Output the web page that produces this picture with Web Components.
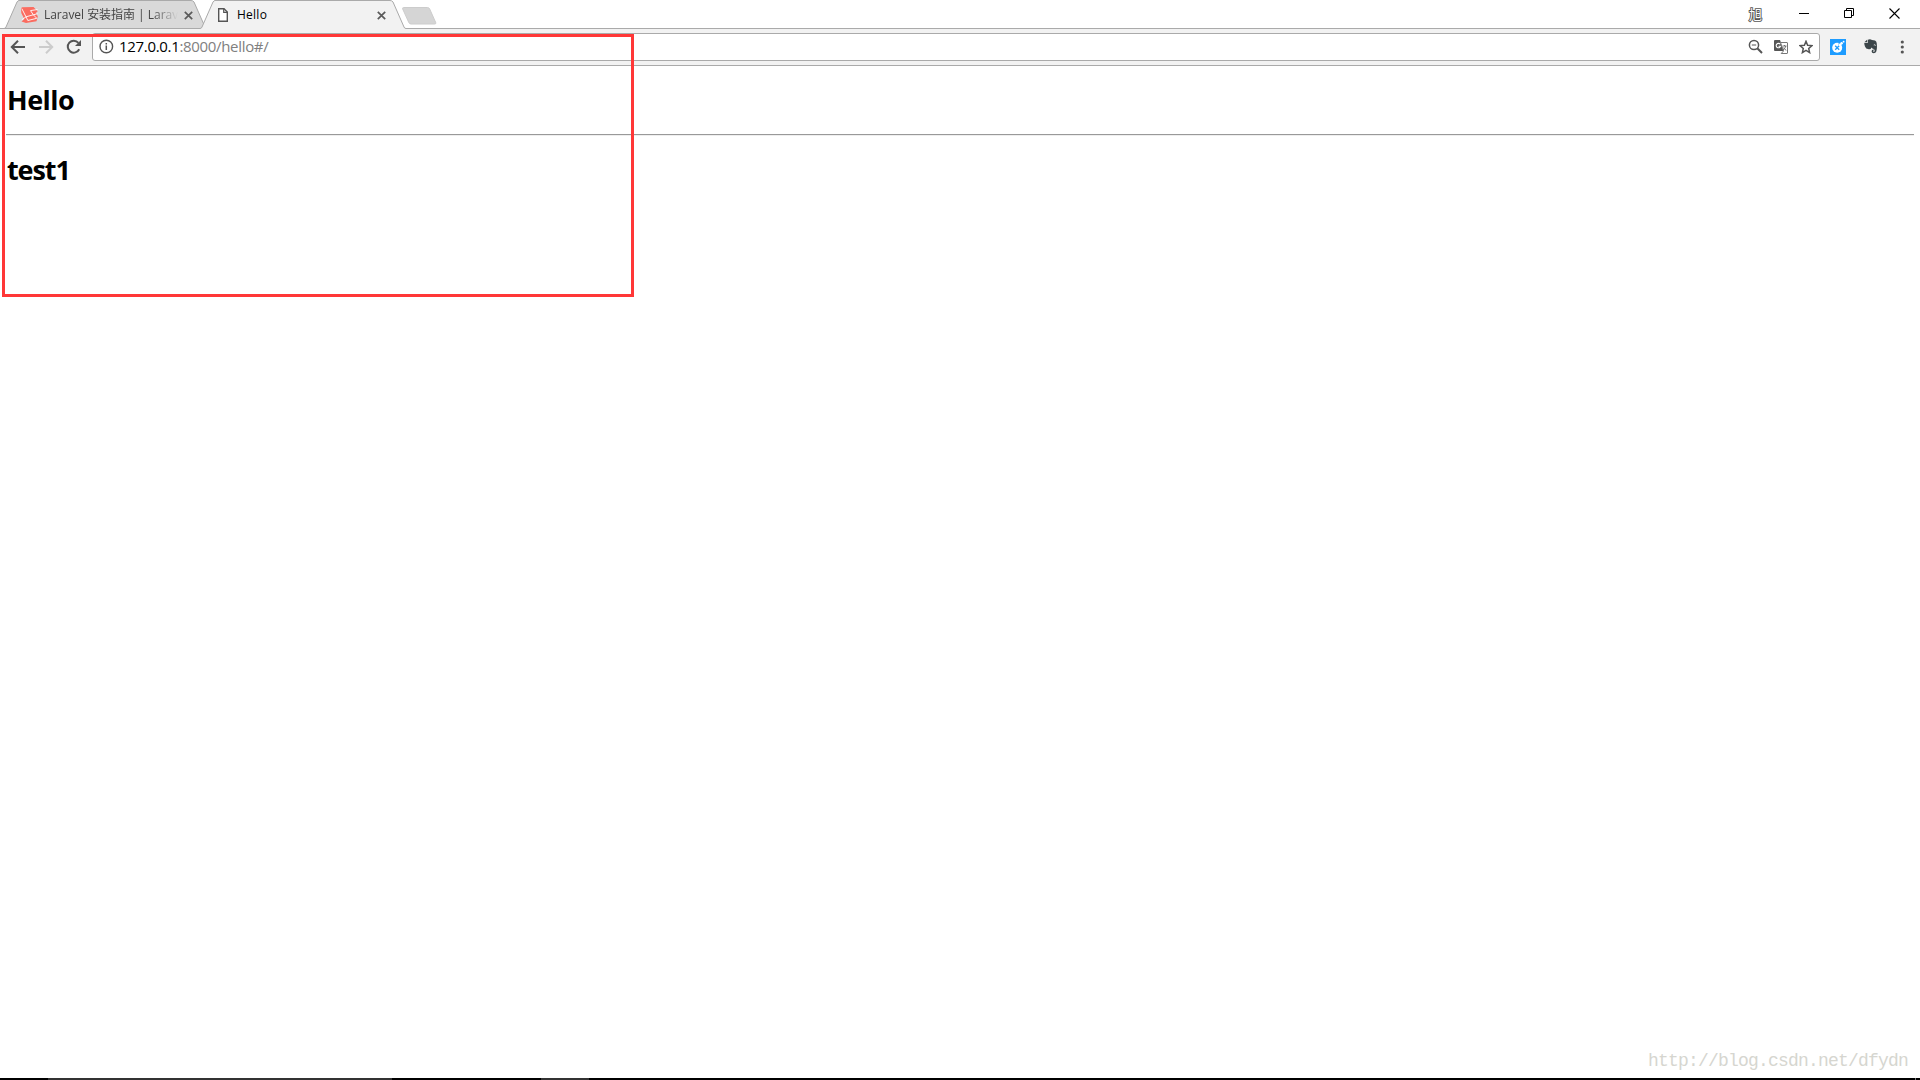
<!DOCTYPE html>
<html lang="zh-CN">
<head>
<meta charset="utf-8">
<title>Hello</title>
<style>
html, body {
    margin: 0;
    height: 100%;
    overflow: hidden;
    background: #fff;
}

body {
    font-family: "Open Sans", "Noto Sans", "Noto Sans CJK SC", sans-serif;
    color: #000;
}
</style>
</head>
<body>
<browser-window>
    <browser-tab slot="tabs" label="Laravel 安装指南 | Larav" icon="laravel"></browser-tab>
    <browser-tab slot="tabs" label="Hello" icon="page" active></browser-tab>
    <address-bar slot="toolbar" host="127.0.0.1" path=":8000/hello#/"></address-bar>
    <hello-page>
        <h1 slot="title">Hello</h1>
        <h1 slot="view">test1</h1>
    </hello-page>
</browser-window>

<script>
/* Icons, one svg body per name, with its width and height */
const icons = {
    back: [16, 16, `<path d="M15 8H2M8 1.8 1.8 8 8 14.2" fill="none" stroke="#555" stroke-width="2"/>`],
    forward: [16, 16, `<path d="M1 8H14M8 1.8 14.2 8 8 14.2" fill="none" stroke="#ccc" stroke-width="2"/>`],
    reload: [16, 16, `<path d="M13.2 10.2A6 6 0 1 1 12.4 3.8" fill="none" stroke="#555" stroke-width="2"/><path d="M15 1V7H9Z" fill="#555"/>`],
    info: [15, 15, `<circle cx="7.3" cy="7.5" r="6.3" fill="none" stroke="#555" stroke-width="1.4"/><path d="M7.3 6.5V11M7.3 4V5.5" stroke="#555" stroke-width="1.5"/>`],
    zoom: [15, 15, `<circle cx="6" cy="6" r="4.6" fill="none" stroke="#555" stroke-width="1.5"/><path d="M9.3 9.3 14 14" stroke="#555" stroke-width="2"/><path d="M3.8 6H8.2" stroke="#555"/>`],
    translate: [14, 14, `<path d="M0 1Q0 0 1 0H6L10 11H1Q0 11 0 10Z" fill="#555"/><path d="M6.5 2.5H13Q13.5 2.5 13.5 3V13Q13.5 13.5 13 13.5H7.2L9.5 11Z" fill="#fff" stroke="#777"/><path d="M6.2 4.3A2.2 2.2 0 1 0 6.5 6.3H4.5" fill="none" stroke="#fff" stroke-width="1.1"/><path d="M8.5 6H12.5M10.5 5V6M11.8 6Q11 9 9 10M9.3 7.5Q10.5 9.5 12.3 10.3" fill="none" stroke="#666" stroke-width=".9"/>`],
    star: [14, 14, `<path d="M7 1.3 8.6 5.2 12.9 5.6 9.7 8.4 10.6 12.6 7 10.4 3.4 12.6 4.3 8.4 1.1 5.6 5.4 5.2Z" fill="none" stroke="#555" stroke-width="1.5"/>`],
    extension: [16, 16, `<path d="M0 0H16V16H0Z" fill="#1e9cff"/><circle cx="7.2" cy="8.8" r="5" fill="#fff"/><path d="M5.2 6.8 9.2 10.8M9.2 6.8 5.2 10.8" stroke="#1e9cff" stroke-width="1.3"/><path d="M9.5 6.5 12 4" stroke="#fff" stroke-width="1.4"/><path d="M8.3 5.2 10.5 3" stroke="#1e9cff"/><circle cx="11.6" cy="4.2" r="1.2" fill="#fff"/><circle cx="13.6" cy="2.7" r=".9" fill="#fff"/>`],
    elephant: [14, 15, `<path d="M4 .8Q6-.2 8 1L11 1.5Q12.5 2 12.7 4Q13.4 9 12.3 12.5Q11.7 14.3 9.7 14.3Q7.5 14.2 7.6 12Q7.8 10.2 9.8 10.4V11.5Q9 11.4 9 12.3Q9.5 13 10.5 12.5Q11 11 9.8 10Q8.2 9.8 7.4 8.5Q6.8 10.7 4.8 10.3Q1.6 10 1 7.5Q.2 5.5.3 4H3.2Q4 4 4 3Z" fill="#3c464a"/><path d="M.4 3.3 3.3.6V3.3Z" fill="#3c464a"/><path d="M9.8 6Q11 5.3 11.7 6.5" fill="none" stroke="#f2f2f2" stroke-width=".9"/>`],
    menu: [4, 14, `<circle cx="2.3" cy="2" r="1.6" fill="#555"/><circle cx="2.3" cy="7" r="1.6" fill="#555"/><circle cx="2.3" cy="12" r="1.6" fill="#555"/>`],
    page: [10, 14, `<path d="M.7.7H6L9.3 4V13.3H.7Z" fill="#fff" stroke="#555" stroke-width="1.4"/><path d="M5.7.7V4.3H9.3" fill="none" stroke="#555" stroke-width="1.2"/>`],
    laravel: [17, 16, `<path d="M0 1.5 1 .3 12.5 0 16.7 4.3 15 5.8 16.8 9.5 15.5 14.3 5 16 .5 14.5 3.3 12 .3 6Z" fill="#fb6c60"/><path d="M.8 1.6 5 9.8 12.3 7.8 9.5 3.6 16.5 2.5M.8 12.8 5 9.8 6.8 13.5 15.8 11.3 12.3 7.8 16.5 6.7" fill="none" stroke="#fff" stroke-width=".9"/>`],
    close: [9, 9, `<path d="M.8.8 8.2 8.2M8.2.8.8 8.2" stroke="#5a5a5a" stroke-width="1.7"/>`],
    minimize: [10, 10, `<path d="M0 5.5H10" stroke="#000"/>`],
    restore: [10, 10, `<path d="M.5 2.5H7.5V9.5H.5ZM2.5 2.5V.5H9.5V7.5H7.5" fill="none" stroke="#000"/>`],
    exit: [11, 11, `<path d="M.5.5 10.5 10.5M10.5.5.5 10.5" stroke="#000" stroke-width="1.1"/>`]
};

/**
 * <ui-icon name="" />
 */
class Icon extends HTMLElement {
    connectedCallback() {
        const [width, height, body] = icons[this.getAttribute("name")];
        this.attachShadow({mode: "open"}).innerHTML = `
            <style>
            :host { display: block; flex: none; }
            svg { display: block; }
            </style>
            <svg width="${width}" height="${height}" viewBox="0 0 ${width} ${height}">${body}</svg>`;
    }
}

/**
 * <browser-tab label="" icon="" active />
 */
class BrowserTab extends HTMLElement {
    connectedCallback() {
        const active = this.hasAttribute("active");
        this.attachShadow({mode: "open"}).innerHTML = `
            <style>
            :host {
                display: grid;
                grid-template-columns: 100%;
                flex: none;
                width: 202px;
                height: 29px;
                margin-right: -6px;
                position: relative;
                z-index: 0;
            }

            :host([active]) {
                width: 206px;
                z-index: 1;
            }

            svg, .row { grid-area: 1 / 1; }

            .row {
                display: flex;
                align-items: center;
                height: 29px;
                padding: 1px 13px 0 17px;
                box-sizing: border-box;
            }

            :host([active]) .row { padding: 1px 20px 0 18px; }

            span {
                flex: 1;
                width: 0;
                margin-left: 6px;
                overflow: hidden;
                white-space: pre;
                font-size: 12px;
                line-height: 18px;
                color: #444;
                letter-spacing: -0.03px;
                -webkit-mask-image: linear-gradient(to right, #000 108px, transparent 134px);
            }

            :host([active]) span {
                margin-left: 9px;
                color: #000;
                letter-spacing: 0.25px;
                -webkit-mask-image: none;
            }
            </style>
            <svg width="206" height="29" viewBox="0 0 206 29">
                ${active
                    ? `<path d="M0 29V28.5L2 27 13 2Q14 .5 15 .5H190Q192 .5 193 2L204 27 206 28.5V29Z" fill="#f2f2f2"/>
                       <path d="M0 28.5Q1.5 28.5 2 27L13 2Q14 .5 15 .5H190Q192 .5 193 2L204 27Q204.5 28.5 206 28.5" fill="none" stroke="#aaa"/>`
                    : `<path d="M0 28.5Q1.5 28.5 2 27L13 2Q14 .5 15 .5H187Q189 .5 190 2L201 27 202 28.5Z" fill="#d9d9d9" stroke="#aaa"/>`}
            </svg>
            <div class="row">
                <ui-icon name="${this.getAttribute("icon")}"></ui-icon>
                <span>${this.getAttribute("label")}</span>
                <ui-icon name="close"></ui-icon>
            </div>`;
    }
}

/**
 * <address-bar host="" path="" />
 */
class AddressBar extends HTMLElement {
    connectedCallback() {
        this.attachShadow({mode: "open"}).innerHTML = `
            <style>
            :host {
                display: flex;
                flex: 1;
                align-items: center;
                justify-content: space-between;
                height: 28px;
                box-sizing: border-box;
                border: 1px solid #aaa;
                border-radius: 3px;
                background: #fff;
                padding: 0 6px;
            }

            div {
                display: flex;
                align-items: center;
            }

            .url {
                margin: 0 0 2px 5px;
                font-size: 15px;
                line-height: 24px;
                letter-spacing: -0.32px;
                color: #000;
            }

            .url span { color: #808080; }
            .actions { gap: 11px; }
            </style>
            <div>
                <ui-icon name="info"></ui-icon>
                <div class="url">${this.getAttribute("host")}<span>${this.getAttribute("path")}</span></div>
            </div>
            <div class="actions">
                <ui-icon name="zoom"></ui-icon>
                <ui-icon name="translate"></ui-icon>
                <ui-icon name="star"></ui-icon>
            </div>`;
    }
}

/**
 * Page content, two headings with a rule between them
 * <hello-page />
 */
class HelloPage extends HTMLElement {
    connectedCallback() {
        this.attachShadow({mode: "open"}).innerHTML = `
            <style>
            :host {
                display: block;
                padding: 0 6px;
            }

            ::slotted(h1) {
                margin: 0;
                padding: 15px 0 0 1px;
                font-size: 27px;
                line-height: 38px;
                font-weight: 700;
                letter-spacing: -0.5px;
            }

            ::slotted([slot="view"]) { letter-spacing: -1.1px; }

            hr {
                margin: 15px 0 0;
                border: 0;
                height: 1px;
                background: #999;
                border-bottom: 1px solid #eee;
            }
            </style>
            <slot name="title"></slot>
            <hr>
            <slot name="view"></slot>`;
    }
}

/**
 * <browser-window />
 */
class BrowserWindow extends HTMLElement {
    connectedCallback() {
        this.attachShadow({mode: "open"}).innerHTML = `
            <style>
            :host {
                display: flex;
                flex-direction: column;
                width: 1920px;
                height: 1080px;
                position: relative;
                overflow: hidden;
            }

            header {
                display: flex;
                height: 29px;
                flex: none;
                padding-left: 4px;
                box-sizing: border-box;
                background: linear-gradient(#aaa, #aaa) 0 28px / 100% 1px no-repeat #fff;
            }

            .new { margin: 7px 0 0 2px; }

            .controls {
                display: flex;
                align-items: center;
                height: 28px;
                margin-left: auto;
                padding-right: 20px;
            }

            .user {
                font-size: 13px;
                line-height: 20px;
                color: #fff;
                -webkit-text-stroke: 1.8px #555;
                paint-order: stroke fill;
                margin-right: 37px;
            }

            .controls ui-icon { margin-bottom: 2px; }
            .controls ui-icon + ui-icon { margin-left: 35px; }

            nav {
                display: flex;
                align-items: center;
                flex: none;
                height: 37px;
                box-sizing: border-box;
                padding: 0 16px 1px 10px;
                background: #f2f2f2;
                border-bottom: 1px solid #aaa;
            }

            .buttons {
                display: flex;
                gap: 12px;
                margin-right: 10px;
            }

            .extensions {
                display: flex;
                align-items: center;
                gap: 18px;
                margin-left: 10px;
            }

            .extensions ui-icon:last-child { margin-left: 4px; }

            main { flex: 1; }

            footer {
                display: flex;
                flex: none;
                height: 2px;
                background: #000;
            }

            footer i { background: #333; }
            footer i:first-child { width: 344px; margin-left: 48px; }
            footer i:nth-child(2) { width: 48px; margin-left: 149px; }
            footer i:last-child { width: 1px; margin: 0 4px 0 auto; background: #777; }

            /* annotation frame over the window */
            .frame {
                position: absolute;
                left: 2px;
                top: 34px;
                width: 632px;
                height: 263px;
                box-sizing: border-box;
                border: 3px solid #ff3737;
                z-index: 2;
            }

            .watermark {
                position: absolute;
                right: 12px;
                bottom: 7px;
                font: 18px/24px "Liberation Mono", monospace;
                letter-spacing: -0.8px;
                color: #d6d6d0;
            }
            </style>
            <header>
                <slot name="tabs"></slot>
                <svg class="new" width="36" height="18" viewBox="0 0 36 18">
                    <path d="M1.8.5H25.5Q27 .5 27.7 2L33.7 15.5Q34.3 17 32.7 17H9Q7.5 17 6.8 15.5L.7 2Q.2.5 1.8.5Z" fill="#d5d5d5" stroke="#ccc"/>
                </svg>
                <div class="controls">
                    <span class="user">旭</span>
                    <ui-icon name="minimize"></ui-icon>
                    <ui-icon name="restore"></ui-icon>
                    <ui-icon name="exit"></ui-icon>
                </div>
            </header>
            <nav>
                <div class="buttons">
                    <ui-icon name="back"></ui-icon>
                    <ui-icon name="forward"></ui-icon>
                    <ui-icon name="reload"></ui-icon>
                </div>
                <slot name="toolbar"></slot>
                <div class="extensions">
                    <ui-icon name="extension"></ui-icon>
                    <ui-icon name="elephant"></ui-icon>
                    <ui-icon name="menu"></ui-icon>
                </div>
            </nav>
            <main><slot></slot></main>
            <footer><i></i><i></i><i></i></footer>
            <div class="frame"></div>
            <div class="watermark">http://blog.csdn.net/dfydn</div>`;
    }
}

customElements.define("ui-icon", Icon);
customElements.define("browser-tab", BrowserTab);
customElements.define("address-bar", AddressBar);
customElements.define("hello-page", HelloPage);
customElements.define("browser-window", BrowserWindow);
</script>
</body>
</html>
